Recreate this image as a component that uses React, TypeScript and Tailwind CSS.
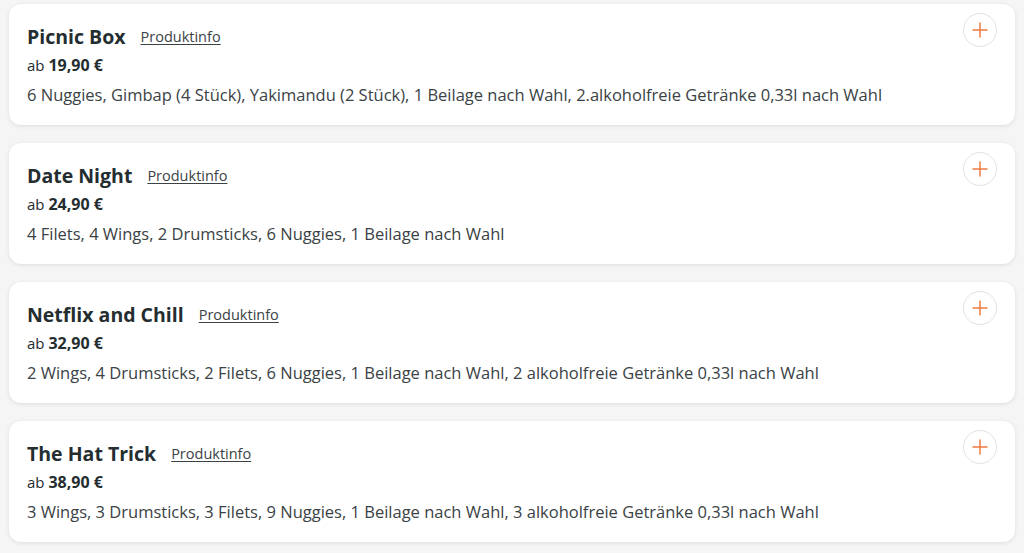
import React from "react";

interface Product {
  name: string;
  price: string;
  description: string;
}

const products: Product[] = [
  {
    name: "Picnic Box",
    price: "19,90 €",
    description:
      "6 Nuggies, Gimbap (4 Stück), Yakimandu (2 Stück), 1 Beilage nach Wahl, 2.alkoholfreie Getränke 0,33l nach Wahl",
  },
  {
    name: "Date Night",
    price: "24,90 €",
    description: "4 Filets, 4 Wings, 2 Drumsticks, 6 Nuggies, 1 Beilage nach Wahl",
  },
  {
    name: "Netflix and Chill",
    price: "32,90 €",
    description:
      "2 Wings, 4 Drumsticks, 2 Filets, 6 Nuggies, 1 Beilage nach Wahl, 2 alkoholfreie Getränke 0,33l nach Wahl",
  },
  {
    name: "The Hat Trick",
    price: "38,90 €",
    description:
      "3 Wings, 3 Drumsticks, 3 Filets, 9 Nuggies, 1 Beilage nach Wahl, 3 alkoholfreie Getränke 0,33l nach Wahl",
  },
];

const PlusIcon = () => (
  <svg width="16" height="16" viewBox="0 0 16 16" fill="none">
    <path d="M8 1v14M1 8h14" stroke="#f07b3f" strokeWidth="1.5" strokeLinecap="round" />
  </svg>
);

const ProductCard: React.FC<{ product: Product }> = ({ product }) => (
  <div className="flex items-start h-[121px] bg-white rounded-xl shadow-[0_1px_4px_rgba(0,0,0,0.10)] pl-[18px] pr-[18px] pt-[19px]">
    <div className="flex-1">
      {/* Title row */}
      <div className="flex items-center h-[28px]">
        <h3 className="text-[19.5px] font-bold text-[#242d30] leading-[28px]">
          {product.name}
        </h3>
        <a href="#" className="ml-[15px] text-[14.5px] text-[#3a4245] underline underline-offset-2">
          Produktinfo
        </a>
      </div>
      <div className="mt-[3px] h-[22px] leading-[22px] text-[#242d30]">
        <span className="text-[15px]">ab </span>
        <span className="text-[16px] font-bold">{product.price}</span>
      </div>
      <p className="mt-[7px] text-[16.5px] leading-[24px] text-[#3a4245]">
        {product.description}
      </p>
    </div>
    <button className="mt-[-10px] shrink-0 w-[34px] h-[34px] rounded-full border border-[#e2e2e2] bg-white flex items-center justify-center">
      <PlusIcon />
    </button>
  </div>
);

export default function App() {
  return (
    <div
      className="min-h-[553px] bg-[#f5f5f5] px-[9px] pt-[4px] flex flex-col gap-[18px]"
      style={{ fontFamily: '"Open Sans", "Noto Sans", sans-serif' }}
    >
      {products.map((p) => (
        <ProductCard key={p.name} product={p} />
      ))}
    </div>
  );
}
